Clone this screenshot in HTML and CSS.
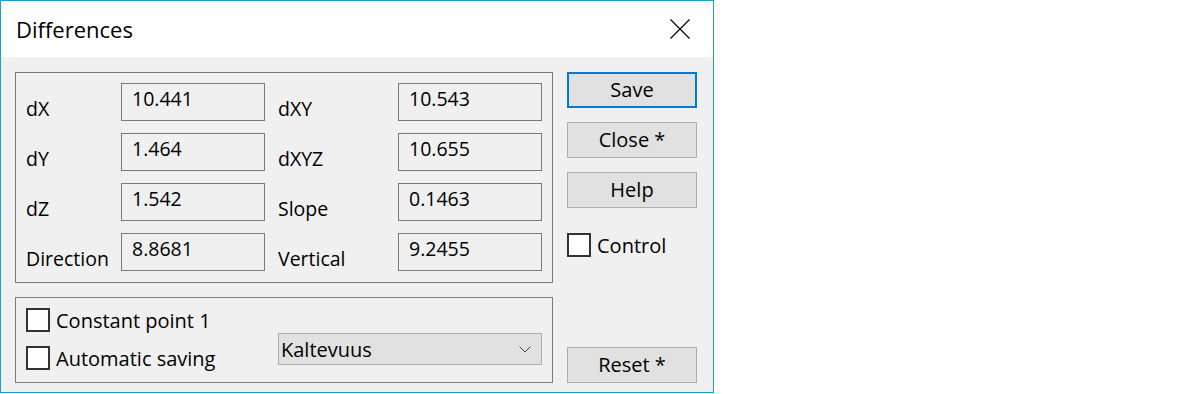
FILE: index.html
```html
<!DOCTYPE html>
<html lang="en">
<head>
<meta charset="UTF-8" />
<title>Differences</title>
<link rel="stylesheet" href="styles.css">
</head>
<body>
  <div class="dialog">
    <div class="titlebar">
      <span class="title">Differences</span>
      <svg class="close-x" width="20" height="20" viewBox="0 0 20 20">
        <path d="M0.5 0.5 L19.5 19.5 M19.5 0.5 L0.5 19.5" />
      </svg>
    </div>

    <div class="content">
      <div class="main">
        <div class="group values">
          <span class="label">dX</span>
          <div class="field">10.441</div>
          <span class="label">dXY</span>
          <div class="field">10.543</div>

          <span class="label">dY</span>
          <div class="field">1.464</div>
          <span class="label">dXYZ</span>
          <div class="field">10.655</div>

          <span class="label">dZ</span>
          <div class="field">1.542</div>
          <span class="label">Slope</span>
          <div class="field">0.1463</div>

          <span class="label">Direction</span>
          <div class="field">8.8681</div>
          <span class="label">Vertical</span>
          <div class="field">9.2455</div>
        </div>

        <div class="group options">
          <label class="check"><span class="box"></span>Constant point 1</label>
          <label class="check"><span class="box"></span>Automatic saving</label>
          <div class="select">
            <span>Kaltevuus</span>
            <svg class="chevron" width="12" height="7" viewBox="0 0 12 7">
              <path d="M0.5 0.5 L6 6 L11.5 0.5" />
            </svg>
          </div>
        </div>
      </div>

      <div class="side">
        <button class="btn default">Save</button>
        <button class="btn">Close *</button>
        <button class="btn">Help</button>
        <label class="check control"><span class="box"></span>Control</label>
        <button class="btn reset">Reset *</button>
      </div>
    </div>
  </div>
</body>
</html>
```

FILE: styles.css
```css
* {
  box-sizing: border-box;
}

body {
  margin: 0;
  background: #fff;
  font-family: 'Segoe UI', 'Open Sans', sans-serif;
  font-size: 19.5px;
  color: #000;
}

.dialog {
  width: 714px;
  height: 393px;
  border: 1px solid #1a9fc6;
  background: #f0f0f0;
  display: flex;
  flex-direction: column;
}

/* title bar */
.titlebar {
  height: 56px;
  background: #fff;
  display: flex;
  align-items: center;
  justify-content: space-between;
  padding: 0 23px 0 15px;
}

.title {
  font-size: 22px;
  line-height: 24px;
}

.close-x path {
  fill: none;
  stroke: #000;
  stroke-width: 1.2;
}

.content {
  flex: 1;
  display: flex;
  gap: 14px;
  padding: 15px 16px 9px 14px;
}

.main {
  width: 538px;
  display: flex;
  flex-direction: column;
  gap: 14px;
}

.group {
  border: 1px solid #7a7a7a;
}

/* value grid */
.values {
  display: grid;
  grid-template-columns: 82px 144px 107px 144px;
  grid-auto-rows: 38px;
  column-gap: 13px;
  row-gap: 12px;
  padding: 10px 10px 11px;
}

.label {
  line-height: 20px;
  padding-top: 16px;
  white-space: nowrap;
}

.field {
  border: 1px solid #7a7a7a;
  line-height: 20px;
  padding: 5px 10px 0;
}

/* options */
.options {
  display: grid;
  grid-template-columns: 242px 264px;
  grid-template-rows: 24px 24px;
  column-gap: 10px;
  row-gap: 14px;
  padding: 10px 10px 12px;
}

.check {
  display: flex;
  align-items: center;
  gap: 6px;
  font-size: 20px;
  line-height: 20px;
  padding-top: 1px;
  white-space: nowrap;
}

.box {
  width: 24px;
  height: 24px;
  flex: none;
  margin-top: -1px;
  border: 2px solid #333;
  background: #fff;
}

.select {
  grid-column: 2;
  grid-row: 1 / 3;
  align-self: end;
  margin-bottom: 5px;
  height: 32px;
  display: flex;
  align-items: center;
  justify-content: space-between;
  padding: 1px 10px 0 2px;
  background: #e1e1e1;
  border: 1px solid #adadad;
  font-size: 20px;
  line-height: 20px;
}

.chevron path {
  fill: none;
  stroke: #444;
  stroke-width: 1;
}

/* buttons column */
.side {
  width: 130px;
  display: flex;
  flex-direction: column;
  gap: 14px;
}

.btn {
  height: 36px;
  font: inherit;
  font-size: 20px;
  line-height: 20px;
  color: #000;
  background: #e1e1e1;
  border: 1px solid #adadad;
  padding: 0;
}

.btn.default {
  border: 2px solid #0078d7;
}

.control {
  margin-top: 11px;
}

.btn.reset {
  margin-top: auto;
}
```
